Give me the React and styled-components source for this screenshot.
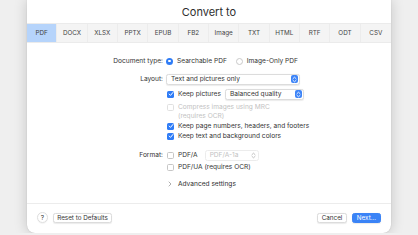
import React from 'react';
import styled, { createGlobalStyle } from 'styled-components';

const GlobalStyle = createGlobalStyle`
  html, body {
    margin: 0;
    background: #efefef;
    font-family: 'Inter', 'Liberation Sans', sans-serif;
    color: #333;
    overflow: hidden;
  }
`;

const formats = ['PDF', 'DOCX', 'XLSX', 'PPTX', 'EPUB', 'FB2', 'Image', 'TXT', 'HTML', 'RTF', 'ODT', 'CSV'];

const Stepper = ({ disabled }) => (
  <StepBox $disabled={disabled}>
    <svg width="5" height="7" viewBox="0 0 5 7">
      <path d="M1 2.6 L2.5 1.2 L4 2.6 M1 4.4 L2.5 5.8 L4 4.4" fill="none"
        stroke={disabled ? '#b8b8b8' : '#fff'} strokeWidth="0.9" strokeLinecap="round" strokeLinejoin="round" />
    </svg>
  </StepBox>
);

const Check = ({ checked, disabled }) => (
  <CheckBox $checked={checked} $disabled={disabled}>
    {checked && (
      <svg width="6" height="6" viewBox="0 0 6 6">
        <path d="M1.2 3.1 L2.5 4.4 L4.9 1.5" fill="none" stroke="#fff" strokeWidth="1" strokeLinecap="round" strokeLinejoin="round" />
      </svg>
    )}
  </CheckBox>
);

const App = () => {
  return (
    <>
      <GlobalStyle />
      <Dialog>
        <Title>Convert to</Title>
        <Tabs>
          {formats.map((f, i) => (
            <Tab key={f} $active={i === 0}>{f}</Tab>
          ))}
        </Tabs>

        <Form>
          <Row $h={12}>
            <Label>Document type:</Label>
            <Controls>
              <Option><Radio $on /><span>Searchable PDF</span></Option>
              <Option $gap={9}><Radio /><span>Image-Only PDF</span></Option>
            </Controls>
          </Row>

          <Row $h={12} $mt={6}>
            <Label>Layout:</Label>
            <Controls>
              <Select $w={134}>
                <span>Text and pictures only</span>
                <Stepper />
              </Select>
            </Controls>
          </Row>

          <Row $h={12} $mt={3}>
            <Label />
            <Controls>
              <Option><Check checked /><span>Keep pictures</span></Option>
              <Select $w={79} $ml={4}>
                <span>Balanced quality</span>
                <Stepper />
              </Select>
            </Controls>
          </Row>

          <Row $mt={3}>
            <Label />
            <Option $top>
              <Check disabled />
              <Muted>Compress images using MRC<br />(requires OCR)</Muted>
            </Option>
          </Row>

          <Row $h={10}>
            <Label />
            <Option><Check checked /><span>Keep page numbers, headers, and footers</span></Option>
          </Row>

          <Row $h={10}>
            <Label />
            <Option><Check checked /><span>Keep text and background colors</span></Option>
          </Row>

          <Row $h={12} $mt={8}>
            <Label>Format:</Label>
            <Controls>
              <Option><Check /><span>PDF/A</span></Option>
              <Select $w={54} $ml={7} $disabled>
                <span>PDF/A-1a</span>
                <Stepper disabled />
              </Select>
            </Controls>
          </Row>

          <Row $h={10} $mt={1}>
            <Label />
            <Option><Check /><span>PDF/UA (requires OCR)</span></Option>
          </Row>

          <Row $h={10} $mt={7}>
            <Label />
            <Advanced>
              <svg width="4" height="6" viewBox="0 0 4 6">
                <path d="M1 1 L3 3 L1 5" fill="none" stroke="#9a9a9a" strokeWidth="0.8" strokeLinecap="round" strokeLinejoin="round" />
              </svg>
              <span>Advanced settings</span>
            </Advanced>
          </Row>
        </Form>

        <Footer>
          <FooterGroup>
            <Help>?</Help>
            <Button $w={59}>Reset to Defaults</Button>
          </FooterGroup>
          <FooterGroup>
            <Button $w={30}>Cancel</Button>
            <Button $w={29} $primary>Next...</Button>
          </FooterGroup>
        </Footer>
      </Dialog>
    </>
  );
};

const Dialog = styled.div`
  margin-left: 27px;
  width: 364px;
  height: 233px;
  background: #fff;
  border-radius: 0 0 8px 8px;
  box-shadow: 0 0 14px rgba(0, 0, 0, 0.18), 0 0 1px rgba(0, 0, 0, 0.25);
  display: flex;
  flex-direction: column;
`;

const Title = styled.div`
  height: 23px;
  display: flex;
  align-items: center;
  justify-content: center;
  font-size: 11px;
  color: #2e2e2e;
`;

const Tabs = styled.div`
  display: grid;
  grid-template-columns: repeat(12, 1fr);
  height: 20px;
  background: #f4f4f4;
  border-top: 1px solid #ebebeb;
  border-bottom: 1px solid #ebebeb;
  box-sizing: border-box;
`;

const Tab = styled.div`
  display: flex;
  align-items: center;
  justify-content: center;
  font-size: 6.3px;
  color: #444;
  background: ${p => (p.$active ? '#b6d4fb' : 'transparent')};
  border-right: 1px solid #ececec;
  &:last-child { border-right: none; }
`;

const Form = styled.div`
  padding-top: 12px;
  display: flex;
  flex-direction: column;
  font-size: 6.6px;
  color: #333;
`;

const Row = styled.div`
  display: grid;
  grid-template-columns: 136px 1fr;
  column-gap: 3px;
  align-items: center;
  height: ${p => (p.$h ? `${p.$h}px` : 'auto')};
  margin-top: ${p => p.$mt || 0}px;
`;

const Label = styled.div`
  text-align: right;
  color: #333;
`;

const Controls = styled.div`
  display: flex;
  align-items: center;
`;

const Option = styled.label`
  display: flex;
  align-items: ${p => (p.$top ? 'flex-start' : 'center')};
  gap: 4px;
  margin-left: ${p => p.$gap || 0}px;
  white-space: nowrap;
`;

const Muted = styled.span`
  color: #c2c2c2;
  line-height: 9px;
`;

const Radio = styled.span`
  width: 7px;
  height: 7px;
  border-radius: 50%;
  box-sizing: border-box;
  flex: none;
  background: ${p => (p.$on ? '#2f7cf6' : '#fff')};
  border: ${p => (p.$on ? 'none' : '0.8px solid #c9c9c9')};
  display: flex;
  align-items: center;
  justify-content: center;
  &::after {
    content: '';
    display: ${p => (p.$on ? 'block' : 'none')};
    width: 2.6px;
    height: 2.6px;
    border-radius: 50%;
    background: #fff;
  }
`;

const CheckBox = styled.span`
  width: 7px;
  height: 7px;
  border-radius: 1.6px;
  box-sizing: border-box;
  flex: none;
  margin-left: 1px;
  display: flex;
  align-items: center;
  justify-content: center;
  background: ${p => (p.$checked ? '#2f7cf6' : '#fff')};
  border: ${p => (p.$checked ? 'none' : `0.8px solid ${p.$disabled ? '#e0e0e0' : '#c6c6c6'}`)};
  ${p => p.$disabled && 'margin-top: 0.5px;'}
`;

const Select = styled.div`
  width: ${p => p.$w}px;
  height: 11px;
  margin-left: ${p => p.$ml || 0}px;
  box-sizing: border-box;
  border: 0.8px solid ${p => (p.$disabled ? '#ececec' : '#dcdcdc')};
  border-radius: 2.5px;
  background: #fff;
  box-shadow: ${p => (p.$disabled ? 'none' : '0 0.5px 1px rgba(0,0,0,0.08)')};
  display: flex;
  align-items: center;
  justify-content: space-between;
  padding: 0 1px 0 4px;
  color: ${p => (p.$disabled ? '#c2c2c2' : '#333')};
`;

const StepBox = styled.span`
  width: 7px;
  height: 8px;
  border-radius: 2px;
  background: ${p => (p.$disabled ? 'transparent' : '#3d84f7')};
  display: flex;
  align-items: center;
  justify-content: center;
`;

const Advanced = styled.div`
  display: flex;
  align-items: center;
  gap: 6px;
  padding-left: 2px;
  color: #2e2e2e;
`;

const Footer = styled.div`
  margin-top: auto;
  height: 27px;
  border-top: 1px solid #ececec;
  display: flex;
  align-items: center;
  justify-content: space-between;
  padding: 0 10px 2px 10px;
`;

const FooterGroup = styled.div`
  display: flex;
  align-items: center;
  gap: 5px;
`;

const Help = styled.div`
  width: 9px;
  height: 9px;
  border-radius: 50%;
  border: 0.8px solid #dedede;
  box-shadow: 0 0.5px 1px rgba(0,0,0,0.08);
  display: flex;
  align-items: center;
  justify-content: center;
  font-size: 6.5px;
  color: #333;
`;

const Button = styled.div`
  height: 10px;
  width: ${p => p.$w}px;
  box-sizing: border-box;
  border-radius: 2.5px;
  display: flex;
  align-items: center;
  justify-content: center;
  white-space: nowrap;
  font-size: 6.3px;
  background: ${p => (p.$primary ? '#3a83f6' : '#fff')};
  color: ${p => (p.$primary ? '#fff' : '#333')};
  border: 0.8px solid ${p => (p.$primary ? '#3a83f6' : '#dcdcdc')};
  box-shadow: 0 0.5px 1px rgba(0,0,0,0.08);
`;

export default App;
